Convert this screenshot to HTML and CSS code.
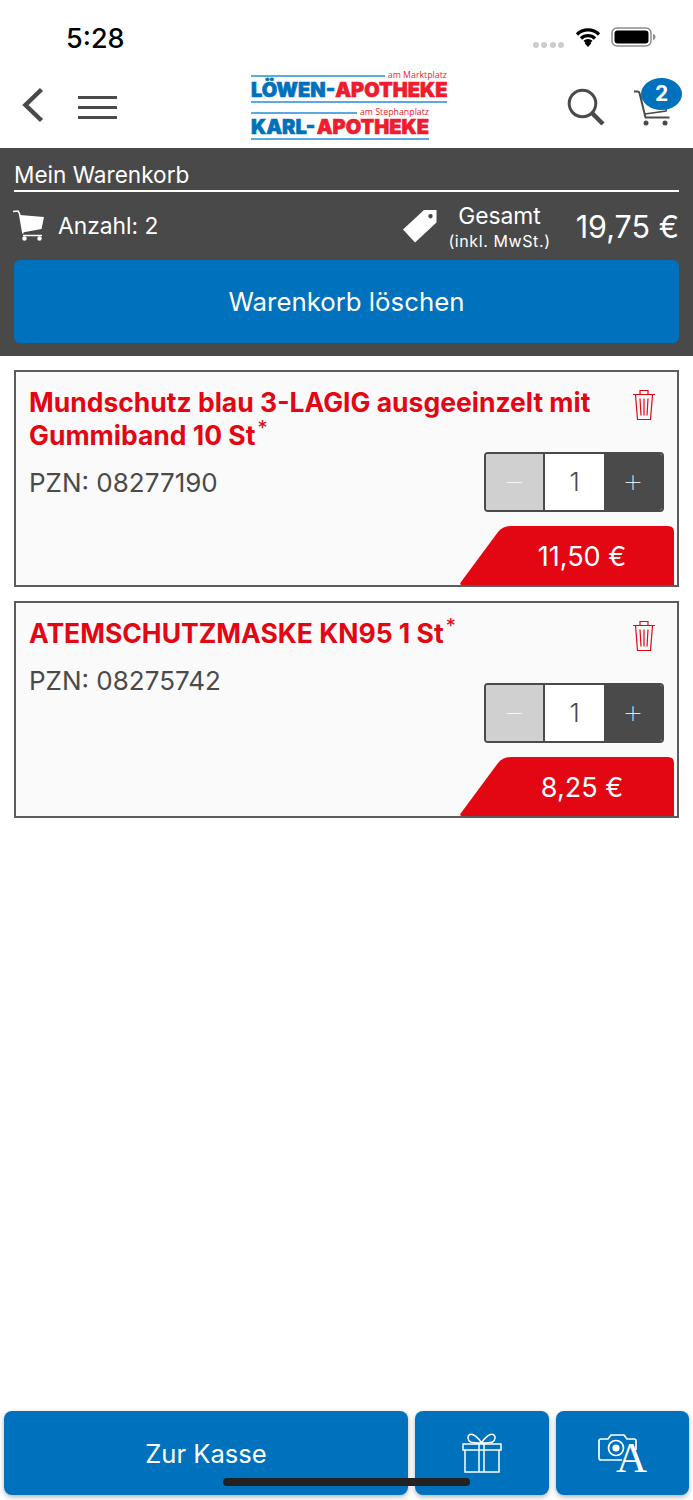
FILE: index.html
```html
<!DOCTYPE html>
<html lang="de">
<head>
  <meta charset="UTF-8">
  <meta name="viewport" content="width=device-width, initial-scale=1.0">
  <title>Mein Warenkorb</title>
  <link rel="stylesheet" href="styles.css">
</head>
<body>
  <div class="status-bar">
    <span class="clock">5:28</span>
    <div class="status-icons">
      <div class="signal"><i></i><i></i><i></i><i></i></div>
      <svg class="wifi" width="26" height="20" viewBox="0 0 26 20">
        <path d="M2 7.500a15.500 15.500 0 0 1 22 0M6 11.500a10 10 0 0 1 14 0M9.600 15a5 5 0 0 1 6.800 0" fill="none" stroke="#000" stroke-width="3.200"/>
        <path d="M13 20l-3.200-3.600a4.600 4.600 0 0 1 6.400 0z"/>
      </svg>
      <svg class="battery" width="45" height="20" viewBox="0 0 45 20">
        <rect x="1" y="1" width="39" height="18" rx="5" fill="none" stroke="#8c8c8c" stroke-width="1.500"/>
        <rect x="3.500" y="3.500" width="34" height="13" rx="3"/>
        <path d="M42 7c1.600.4 2.500 1.500 2.500 3s-.9 2.600-2.500 3z" fill="#8c8c8c"/>
      </svg>
    </div>
  </div>

  <header class="top-nav">
    <svg class="back" width="24" height="36" viewBox="0 0 24 36">
      <path d="M20.500 2.500L4.500 18l16 15.500" fill="none" stroke="#4a4a4a" stroke-width="4.500"/>
    </svg>
    <div class="menu"><i></i><i></i><i></i></div>
    <div class="logo">
      <div class="logo-row">
        <span class="logo-rule"></span><span class="logo-place">am Marktplatz</span>
      </div>
      <div class="logo-name"><b>LÖWEN-</b><em>APOTHEKE</em></div>
      <div class="logo-line"></div>
      <div class="logo-second">
        <div class="logo-row">
          <span class="logo-rule"></span><span class="logo-place">am Stephanplatz</span>
        </div>
        <div class="logo-name"><b>KARL-</b><em>APOTHEKE</em></div>
        <div class="logo-line"></div>
      </div>
    </div>
    <svg class="search" width="38" height="38" viewBox="0 0 38 38">
      <circle cx="15.500" cy="15.500" r="13.300" fill="none" stroke="#4a4a4a" stroke-width="3"/>
      <path d="M25 25l11 11" stroke="#4a4a4a" stroke-width="4.500"/>
    </svg>
    <div class="nav-cart">
      <svg width="37" height="36" viewBox="0 0 37 36">
        <path d="M0 1.500h3.500c1 0 1.700.5 2 1.500l6 24.500h24" fill="none" stroke="#4a4a4a" stroke-width="2"/>
        <path d="M7 7h28l-3 14-21 3" fill="none" stroke="#4a4a4a" stroke-width="1.500"/>
        <circle cx="12" cy="33" r="2.500" fill="#4a4a4a"/>
        <circle cx="31" cy="33" r="2.500" fill="#4a4a4a"/>
      </svg>
      <span class="badge">2</span>
    </div>
  </header>

  <section class="summary">
    <h1 class="summary-title">Mein Warenkorb</h1>
    <div class="summary-row">
      <svg class="summary-cart" width="31" height="31" viewBox="0 0 31 31">
        <path d="M0 1.500l5-.5 1.500 2.500L10 23.500" fill="none" stroke="#fff" stroke-width="1.500"/>
        <path d="M7 5l24 2-2.500 12-19 3.500z" fill="#fff"/>
        <path d="M10 25.500h19" stroke="#fff" stroke-width="1.500"/>
        <circle cx="11.500" cy="28.500" r="2.200" fill="#fff"/>
        <circle cx="26.500" cy="28.500" r="2.200" fill="#fff"/>
      </svg>
      <span class="count">Anzahl: 2</span>
      <svg class="summary-tag" width="34" height="34" viewBox="0 0 34 34">
        <path fill-rule="evenodd" fill="#fff" d="M0 20.500L21 1h12.500v12.500L12 33.500zM27.500 5a2.200 2.200 0 1 0 .01 0z"/>
      </svg>
      <div class="total-label">
        <span>Gesamt</span>
        <small>(inkl. MwSt.)</small>
      </div>
      <span class="total">19,75 €</span>
    </div>
    <button class="clear-btn">Warenkorb löschen</button>
  </section>

  <main class="items">
    <article class="item">
      <div class="item-info">
        <h2 class="item-title">Mundschutz blau 3-LAGIG ausgeeinzelt mit Gummiband 10 St<sup>*</sup></h2>
        <p class="item-pzn">PZN: 08277190</p>
      </div>
      <svg class="trash" width="24" height="32" viewBox="0 0 24 32">
        <path d="M1 5.500h22M8 5.500V1.500h8v4M3.500 5.500l2 25h13l2-25M8 9.500l1 17M12 9.500v17M16 9.500l-1 17" fill="none" stroke="#e30613" stroke-width="1.200"/>
      </svg>
      <div class="stepper">
        <span class="step minus">−</span>
        <span class="qty">1</span>
        <span class="step plus">+</span>
      </div>
      <div class="price">11,50 €</div>
    </article>

    <article class="item">
      <div class="item-info">
        <h2 class="item-title">ATEMSCHUTZMASKE KN95 1 St<sup>*</sup></h2>
        <p class="item-pzn">PZN: 08275742</p>
      </div>
      <svg class="trash" width="24" height="32" viewBox="0 0 24 32">
        <path d="M1 5.500h22M8 5.500V1.500h8v4M3.500 5.500l2 25h13l2-25M8 9.500l1 17M12 9.500v17M16 9.500l-1 17" fill="none" stroke="#e30613" stroke-width="1.200"/>
      </svg>
      <div class="stepper">
        <span class="step minus">−</span>
        <span class="qty">1</span>
        <span class="step plus">+</span>
      </div>
      <div class="price">8,25 €</div>
    </article>
  </main>

  <footer class="actions">
    <button class="action checkout">Zur Kasse</button>
    <button class="action gift">
      <svg width="40" height="40" viewBox="0 0 40 40" fill="none" stroke="#fff" stroke-width="1.500">
        <path d="M1 11h38v6H1zM3 17h34v22H3zM17 11v28M22 11v28"/>
        <path d="M19.500 10C16 4 11 .5 8 1.500c-3 1-2.500 6 .5 7.500 3 1 7 1 11 1zM19.500 10c3.500-6 8.500-9.500 11.500-8.500 3 1 2.500 6-.5 7.500-3 1-7 1-11 1z"/>
      </svg>
    </button>
    <button class="action scan">
      <svg width="60" height="60" viewBox="0 0 60 60">
        <g transform="translate(5 10)">
          <path d="M24 27H3q-2 0-2-2V8q0-2 2-2h7l3-4h13l3 4h7q2 0 2 2v9" fill="none" stroke="#fff" stroke-width="1.700"/>
          <circle cx="18" cy="15" r="7.500" fill="none" stroke="#fff" stroke-width="1.700"/>
          <circle cx="18" cy="15" r="3.600" fill="#fff"/>
        </g>
        <text x="38.500" y="49" class="scan-letter">A</text>
      </svg>
    </button>
  </footer>
  <div class="home-indicator"></div>
</body>
</html>
```

FILE: styles.css
```css
* {
  box-sizing: border-box;
}

body {
  margin: 0;
  height: 1500px;
  display: flex;
  flex-direction: column;
  position: relative;
  overflow: hidden;
  background-color: #ffffff;
  color: #4a4a4a;
  font-family: Inter, "Noto Sans", sans-serif;
}

/* status bar */
.status-bar {
  height: 68px;
  display: flex;
  justify-content: space-between;
  padding: 28px 37px 0 66px;
}

.clock {
  color: #000;
  font-size: 27px;
  font-weight: 500;
  line-height: 22px;
}

.status-icons {
  display: flex;
  align-items: flex-start;
  margin-top: -1px;
}

.signal {
  display: flex;
  gap: 2.500px;
  margin: 15px 11px 0 0;
}

.signal i {
  width: 6px;
  height: 6px;
  border-radius: 50%;
  background-color: #cccccc;
}

.wifi {
  margin-right: 10px;
}

/* nav */
.top-nav {
  height: 80px;
  display: flex;
  align-items: flex-start;
}

.back {
  margin: 19px 0 0 21px;
}

.menu {
  width: 39px;
  margin: 28px 0 0 33px;
  display: flex;
  flex-direction: column;
  gap: 7px;
}

.menu i {
  height: 3px;
  background-color: #4a4a4a;
}

.logo {
  width: 196px;
  margin: 3px 0 0 134px;
}

.logo-second {
  width: 178px;
  margin-top: 5px;
}

.logo-row {
  display: flex;
  align-items: center;
  gap: 3px;
  height: 9px;
}

.logo-rule {
  flex: 1;
  height: 2px;
  background-color: #5aa9e0;
}

.logo-place {
  color: #ee1c2e;
  font-family: "Open Sans", sans-serif;
  font-size: 8.800px;
  line-height: 9px;
  white-space: nowrap;
}

.logo-name {
  display: flex;
  justify-content: space-between;
  margin-top: 1px;
  font-family: Inter, sans-serif;
  font-size: 20px;
  font-weight: 900;
  line-height: 18px;
  white-space: nowrap;
  -webkit-text-stroke: 0.6px;
}

.logo-name b {
  color: #0071bc;
  font-weight: 900;
}

.logo-name em {
  color: #ee1c2e;
  font-style: normal;
}

.logo-line {
  height: 2px;
  background-color: #5aa9e0;
  margin-top: 2px;
}

.search {
  margin: 20px 0 0 120px;
}

.nav-cart {
  position: relative;
  width: 37px;
  height: 36px;
  margin: 22px 0 0 29px;
}

.badge {
  position: absolute;
  left: 7px;
  top: -12px;
  width: 41px;
  height: 32px;
  border-radius: 50%;
  background-color: #0071bc;
  color: white;
  font-size: 21px;
  font-weight: 700;
  line-height: 32px;
  text-align: center;
}

/* dark summary */
.summary {
  height: 208px;
  padding: 12px 14px 0;
  background-color: #494949;
  color: white;
}

.summary-title {
  margin: 0;
  height: 32px;
  border-bottom: 2px solid white;
  font-size: 22.600px;
  font-weight: 400;
  line-height: 29px;
}

.summary-row {
  height: 68px;
  display: flex;
  align-items: flex-start;
}

.summary-cart {
  margin: 18px 0 0 -1px;
}

.count {
  margin: 19px 0 0 14px;
  font-size: 22.800px;
  line-height: 30px;
}

.summary-tag {
  margin: 17px 0 0 245px;
}

.total-label {
  width: 100px;
  margin: 11px 0 0 12px;
  display: flex;
  flex-direction: column;
  align-items: center;
}

.total-label span {
  font-size: 22.800px;
  line-height: 26px;
}

.total-label small {
  font-size: 16px;
  letter-spacing: 0.6px;
  line-height: 24px;
  white-space: nowrap;
}

.total {
  margin: 17px 0 0 auto;
  font-size: 30.500px;
  line-height: 36px;
  white-space: nowrap;
}

.clear-btn {
  width: 100%;
  height: 83px;
  padding: 0;
  border: none;
  border-radius: 6px;
  background-color: #0071bc;
  color: white;
  font-family: inherit;
  font-size: 25.800px;
}

/* items */
.items {
  flex: 1;
  padding: 14px;
  display: flex;
  flex-direction: column;
  gap: 14px;
}

.item {
  height: 217px;
  display: grid;
  grid-template-columns: 1fr 180px;
  grid-template-rows: 80px 60px 1fr;
  border: 2px solid #5c5c5c;
  background-color: #fafafa;
}

.item-info {
  grid-column: 1 / 3;
  grid-row: 1 / 4;
  padding: 14px 70px 0 13px;
}

.item-title {
  margin: 0;
  color: #e30613;
  font-size: 26.500px;
  font-weight: 700;
  line-height: 33px;
}

.item-title sup {
  margin-left: 2px;
  font-size: 20px;
  font-weight: 400;
  line-height: 0;
}

.item-pzn {
  margin: 15px 0 0;
  font-size: 26px;
  line-height: 31px;
}

.trash {
  grid-column: 2;
  grid-row: 1;
  justify-self: end;
  margin: 17px 21px 0 0;
}

.stepper {
  grid-column: 2;
  grid-row: 2;
  justify-self: end;
  width: 180px;
  margin-right: 13px;
  display: flex;
  border: 2px solid #4a4a4a;
  border-radius: 4px;
  overflow: hidden;
}

.step {
  width: 57px;
  color: white;
  font-size: 36px;
  font-weight: 100;
  line-height: 52px;
  text-align: center;
}

.plus {
  width: 58px;
  background-color: #4a4a4a;
}

.minus {
  background-color: #d0d0d0;
}

.qty {
  flex: 1;
  background-color: white;
  border-left: 2px solid #4a4a4a;
  font-size: 26px;
  font-weight: 300;
  line-height: 56px;
  text-align: center;
}

.price {
  grid-column: 1 / 3;
  grid-row: 3;
  justify-self: end;
  align-self: end;
  width: 214px;
  height: 59px;
  margin-right: 3px;
  padding-left: 30px;
  background-color: #e30613;
  clip-path: path("M2 59 Q-1 59 1 56 L38 6 Q43 0 52 0 H208 Q214 0 214 6 V59 Z");
  color: white;
  font-size: 27px;
  line-height: 61px;
  text-align: center;
}

/* bottom buttons */
.actions {
  display: flex;
  gap: 7px;
  padding: 0 4px 5px;
}

.action {
  height: 84px;
  padding: 0;
  border: none;
  border-radius: 8px;
  background-color: #0071bc;
  box-shadow: 0 2px 5px rgba(0, 0, 0, 0.3);
  color: white;
  font-family: inherit;
  display: flex;
  align-items: center;
  justify-content: center;
}

.checkout {
  width: 404px;
  font-size: 25.600px;
}

.gift {
  width: 134px;
}

.scan {
  width: 133px;
}

.scan-letter {
  fill: white;
  font-family: "Liberation Serif", serif;
  font-size: 43px;
  text-anchor: middle;
}

.home-indicator {
  position: absolute;
  left: 223px;
  top: 1478px;
  width: 247px;
  height: 8px;
  border-radius: 4px;
  background-color: #222222;
}
```
